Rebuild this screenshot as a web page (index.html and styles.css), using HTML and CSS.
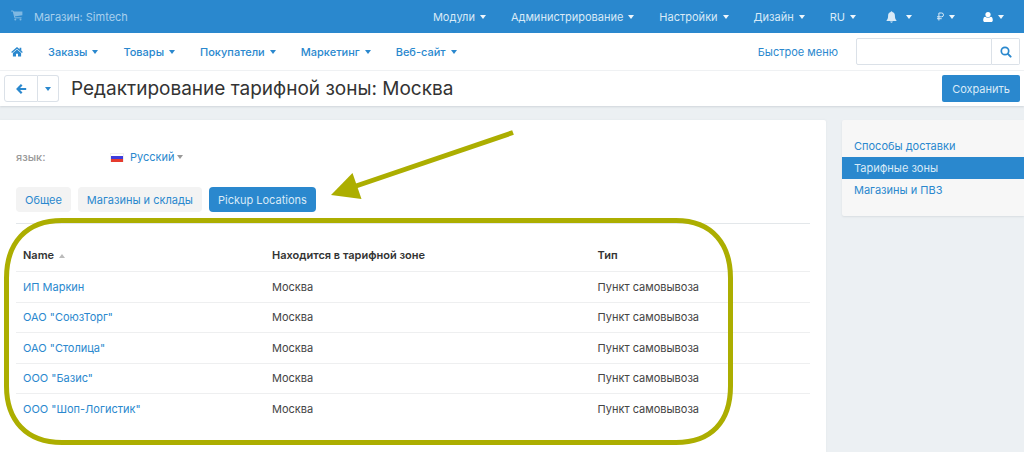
FILE: index.html
```html
<!DOCTYPE html>
<html lang="ru">
<head>
<meta charset="utf-8">
<title>Редактирование тарифной зоны: Москва</title>
<link rel="stylesheet" href="styles.css">
</head>
<body>
<header class="topbar">
  <a class="store" href="#">
    <svg class="icon-cart" width="12" height="11" viewBox="0 0 12 11" aria-hidden="true"><path d="M.5 1h1.700l1.600 6.800h6.400" fill="none" stroke="currentColor" stroke-linejoin="round" stroke-linecap="round"/><path d="M2.400 1.400H11.400V5.200L3.400 6.400z" fill="currentColor"/><circle cx="4.300" cy="9.500" r="1" fill="currentColor"/><circle cx="9.500" cy="9.500" r="1" fill="currentColor"/></svg>
    <span>Магазин: Simtech</span>
  </a>
  <nav class="top-menu" aria-label="Система">
    <a href="#">Модули<i class="caret"></i></a>
    <a href="#">Администрирование<i class="caret"></i></a>
    <a href="#">Настройки<i class="caret"></i></a>
    <a href="#">Дизайн<i class="caret"></i></a>
    <a href="#">RU<i class="caret"></i></a>
    <a class="notify" href="#" aria-label="Уведомления"><svg width="11" height="12" viewBox="0 0 10 12" aria-hidden="true"><path d="M5 .3c.5 0 .8.3.8.8 1.700.4 2.600 1.700 2.600 3.400 0 2.700.5 3.800 1.500 4.800v.7H.1v-.7c1-1 1.500-2.100 1.500-4.800 0-1.700.9-3 2.600-3.400 0-.5.3-.8.8-.8zM3.700 10.500h2.600c0 .7-.6 1.200-1.300 1.200s-1.300-.5-1.300-1.200z" fill="currentColor"/></svg><i class="caret"></i></a>
    <a href="#" aria-label="Валюта"><svg width="7" height="9" viewBox="0 0 7 9" aria-hidden="true"><path d="M1.900 8.500V1h2.700a1.900 1.900 0 0 1 0 3.800H0M0 6.700h4.700" fill="none" stroke="currentColor"/></svg><i class="caret"></i></a>
    <a class="user" href="#" aria-label="Профиль"><svg width="10" height="10" viewBox="0 0 10 10" aria-hidden="true"><circle cx="5" cy="2.600" r="2.600" fill="currentColor"/><path d="M2.300 4.700c1.500 1.500 3.900 1.500 5.400 0C9.200 4.800 9.800 6.300 9.800 8.200c0 1.100-.7 1.800-1.700 1.800H1.900C.9 10 .2 9.300.2 8.200c0-1.900.6-3.400 2.100-3.500z" fill="currentColor"/></svg><i class="caret"></i></a>
  </nav>
</header>

<div class="navbar">
  <nav class="main-menu" aria-label="Главное меню">
    <a class="home" href="#" aria-label="Главная"><svg width="12" height="10" viewBox="0 0 12 10" aria-hidden="true"><path d="M.6 5.400 6 .9l5.400 4.500" fill="none" stroke="currentColor" stroke-width="1.300"/><path d="M8.600.7h1.700v3.400L8.600 2.700zM1.900 5.900 6 2.500l4.100 3.400v3.700H7V6.800H5v2.800H1.900z" fill="currentColor"/></svg></a>
    <a href="#">Заказы<i class="caret"></i></a>
    <a href="#">Товары<i class="caret"></i></a>
    <a href="#">Покупатели<i class="caret"></i></a>
    <a href="#">Маркетинг<i class="caret"></i></a>
    <a href="#">Веб-сайт<i class="caret"></i></a>
  </nav>
  <a class="quick" href="#">Быстрое меню</a>
  <form class="search" role="search">
    <input type="search" aria-label="Поиск">
    <button type="button" aria-label="Найти"><svg width="12" height="12" viewBox="0 0 12 12" aria-hidden="true"><circle cx="5" cy="5" r="3.700" fill="none" stroke="currentColor" stroke-width="1.700"/><path d="m7.900 7.900 2.700 2.700" stroke="currentColor" stroke-width="2" stroke-linecap="round"/></svg></button>
  </form>
</div>

<div class="titlebar">
  <div class="back-group">
    <button class="back" type="button" aria-label="Назад"><svg width="11" height="10" viewBox="0 0 11 10" aria-hidden="true"><path d="M5.700.8 1.600 5l4.100 4.200M2 5h8.200" fill="none" stroke="currentColor" stroke-width="2.200"/></svg></button>
    <button class="back-more" type="button" aria-label="Недавние страницы"><i class="caret"></i></button>
  </div>
  <h1>Редактирование тарифной зоны: Москва</h1>
  <button class="save" type="button">Сохранить</button>
</div>

<div class="layout">
  <main class="panel">
    <div class="language">
      <span class="language-label">язык:</span>
      <a href="#"><span class="flag"></span>Русский<i class="caret caret-gray"></i></a>
    </div>
    <nav class="tabs" aria-label="Разделы">
      <a href="#">Общее</a>
      <a href="#">Магазины и склады</a>
      <a class="active" href="#" aria-current="page">Pickup Locations</a>
    </nav>
    <table class="locations">
      <thead>
        <tr><th class="col-name">Name<i class="caret-up"></i></th><th class="col-zone">Находится в тарифной зоне</th><th>Тип</th></tr>
      </thead>
      <tbody>
        <tr><td><a href="#">ИП Маркин</a></td><td>Москва</td><td>Пункт самовывоза</td></tr>
        <tr><td><a href="#">ОАО "СоюзТорг"</a></td><td>Москва</td><td>Пункт самовывоза</td></tr>
        <tr><td><a href="#">ОАО "Столица"</a></td><td>Москва</td><td>Пункт самовывоза</td></tr>
        <tr><td><a href="#">ООО "Базис"</a></td><td>Москва</td><td>Пункт самовывоза</td></tr>
        <tr><td><a href="#">ООО "Шоп-Логистик"</a></td><td>Москва</td><td>Пункт самовывоза</td></tr>
      </tbody>
    </table>
    <svg class="annotation" width="740" height="332" viewBox="0 0 740 332" aria-hidden="true">
      <path d="M62 100.500H676C713 100.500 730.500 125 730.500 158V266C730.500 302 711 322.500 676 322.500H62C26 322.500 6.500 300 6.500 266V158C6.500 123 26 100.500 62 100.500Z" fill="none" stroke="#acae00" stroke-width="5"/>
      <path d="M513 12.500 356 66" stroke="#acae00" stroke-width="5"/>
      <path d="M331 75 352.500 53 361.500 79Z" fill="#acae00"/>
    </svg>
  </main>
  <aside class="sidebar">
    <a href="#">Способы доставки</a>
    <a class="active" href="#" aria-current="page">Тарифные зоны</a>
    <a href="#">Магазины и ПВЗ</a>
  </aside>
</div>
</body>
</html>
```
FILE: styles.css
```css
* { box-sizing: border-box; }

body {
  margin: 0;
  min-height: 100vh;
  display: flex;
  flex-direction: column;
  background: #ecf0f3;
  color: #444;
  font: 11px/16px Inter, "Liberation Sans", sans-serif;
}

a { color: #2a88ce; text-decoration: none; }
button, input { font: inherit; margin: 0; }
svg { display: block; }

.caret {
  flex: none;
  border: 3px solid transparent;
  border-top: 4px solid currentColor;
  border-bottom: 0;
}
.caret-gray { color: #999; }
.caret-up {
  display: inline-block;
  margin-left: 5px;
  vertical-align: middle;
  border: 3px solid transparent;
  border-bottom: 4px solid #bbb;
  border-top: 0;
}

.topbar {
  display: flex;
  justify-content: space-between;
  align-items: center;
  height: 33px;
  padding: 0 20px 0 11px;
  background: #2a88ce;
}
.topbar a { color: #d9eaf7; }
.topbar .store { display: flex; align-items: center; gap: 11px; color: #a9d0ed; }
.icon-cart { margin-bottom: 3px; color: #7fb8e2; }
.top-menu, .main-menu { display: flex; align-items: center; }
.top-menu { gap: 25px; }
.main-menu { gap: 25px; font-weight: 500; }
.top-menu a, .main-menu a { display: flex; align-items: center; gap: 5px; }
.top-menu .caret { color: #eef6fc; }
.top-menu .notify { margin-left: 5px; gap: 9px; }
.top-menu .user { margin-left: 3px; color: #fff; }

.navbar {
  display: flex;
  align-items: center;
  height: 38px;
  padding: 0 4px 0 11px;
  background: #fff;
  border-bottom: 1px solid #f2f4f5;
}
.quick { margin-left: auto; }
.search { display: flex; width: 164px; margin-left: 18px; }
.search input {
  flex: 1;
  min-width: 0;
  height: 27px;
  padding: 0 6px;
  border: 1px solid #dbe1e8;
  border-radius: 2px 0 0 2px;
  background: #fff;
}
.search button {
  width: 28px;
  padding: 0 0 0 8px;
  border: 1px solid #dbe1e8;
  border-left: 0;
  border-radius: 0 2px 2px 0;
  background: #fff;
  color: #2a88ce;
}

.titlebar {
  display: flex;
  align-items: center;
  height: 35px;
  padding: 0 4px;
  background: #fff;
  box-shadow: 0 1px 2px #cfd5da;
}
.back-group { display: flex; height: 27px; }
.back-group button {
  display: flex;
  align-items: center;
  justify-content: center;
  padding: 0;
  border: 1px solid #dbe1e8;
  background: #fff;
  color: #2a88ce;
}
.back-group .back { width: 34px; border-radius: 3px 0 0 3px; }
.back-group .back-more { width: 21px; border-left: 0; border-radius: 0 3px 3px 0; }
h1 { margin: 0 0 0 12px; font-size: 19px; line-height: 24px; font-weight: 400; color: #333; }
.save {
  height: 27px;
  margin-left: auto;
  padding: 0 10px;
  border: 0;
  border-radius: 2px;
  background: #2a88ce;
  color: #d9eaf7;
}

.layout { flex: 1; display: flex; align-items: flex-start; gap: 16px; padding-top: 14px; }
.panel {
  position: relative;
  flex: 1;
  align-self: stretch;
  padding: 29px 16px 16px;
  border-radius: 0 2px 0 0;
  background: #fff;
  box-shadow: 0 0 2px #dde2e6;
}
.language { display: flex; align-items: center; }
.language-label { width: 94px; color: #999; font-weight: 500; }
.language a { display: flex; align-items: center; gap: 2px; }
.flag {
  width: 14px;
  height: 9px;
  margin-right: 4px;
  border: 1px solid #eee;
  border-bottom: 0;
  background: linear-gradient(#fff 0 2px, #3d3ddd 2px 5px, #e63b2e 5px);
}
.tabs {
  display: flex;
  gap: 7px;
  margin-top: 22px;
  padding-bottom: 11px;
  border-bottom: 1px solid #e3e7ea;
}
.tabs a { padding: 5px 9px 4px; border-radius: 4px; background: #f3f3f3; }
.tabs .active { background: #2a88ce; color: #d9eaf7; }

.locations { width: 100%; margin-top: 16px; border-collapse: collapse; table-layout: fixed; }
.locations th, .locations td { height: 31px; padding: 0 7px; text-align: left; }
.locations tr:nth-child(even) td { height: 30px; }
.locations tr { border-bottom: 1px solid #eeeff0; }
.locations tbody tr:last-child { border-bottom: 0; }
.locations th { font-weight: 600; color: #333; }
.locations .col-name { width: 249px; }
.locations .col-zone { width: 41%; }

.annotation { position: absolute; top: 0; left: 0; pointer-events: none; }

.sidebar {
  flex: none;
  width: 182px;
  padding: 15px 0;
  border-radius: 2px 0 0 2px;
  background: #f7f7f7;
  box-shadow: 0 1px 2px #d8dde1;
}
.sidebar a { display: block; padding: 3px 12px; }
.sidebar .active { background: #2a88ce; color: #d9eaf7; }
```
